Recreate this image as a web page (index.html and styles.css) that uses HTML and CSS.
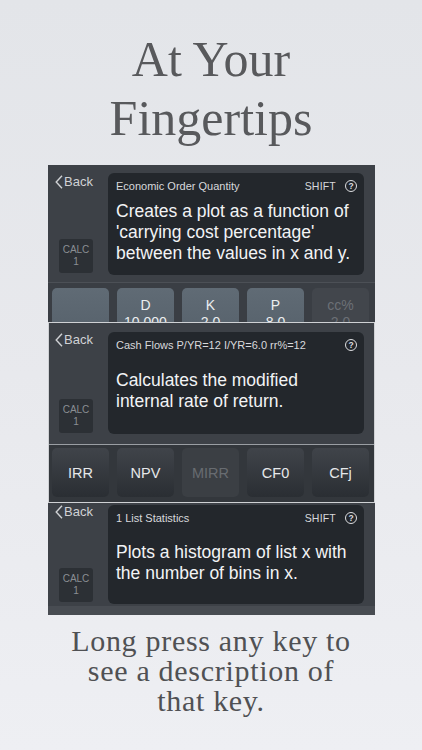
FILE: index.html
```html
<!DOCTYPE html>
<html>
<head>
<meta charset="utf-8">
<link rel="stylesheet" href="styles.css">
</head>
<body>
<h1 class="title">At Your<br>Fingertips</h1>

<div class="stack">
  <section class="panel p1">
    <div class="head">
      <div class="side">
        <div class="back"><svg class="chev" width="8" height="14" viewBox="0 0 8 14"><polyline points="7,0.8 1.2,7 7,13.2" fill="none" stroke="#d0d2d5" stroke-width="1.4"/></svg>Back</div>
        <div class="calc"><span>CALC</span><span>1</span></div>
      </div>
      <div class="box">
        <div class="box-top"><span class="mode">Economic Order Quantity</span><span class="shift">SHIFT</span><span class="help">?</span></div>
        <div class="desc"><p>Creates a plot as a function of<br>'carrying cost percentage'<br>between the values in x and y.</p></div>
      </div>
    </div>
    <div class="keys blue">
      <div class="key"></div>
      <div class="key"><span>D</span><span>10.000</span></div>
      <div class="key"><span>K</span><span>2.0</span></div>
      <div class="key"><span>P</span><span>8.0</span></div>
      <div class="key off"><span>cc%</span><span>2.0</span></div>
    </div>
  </section>

  <section class="panel p2">
    <div class="head">
      <div class="side">
        <div class="back"><svg class="chev" width="8" height="14" viewBox="0 0 8 14"><polyline points="7,0.8 1.2,7 7,13.2" fill="none" stroke="#d0d2d5" stroke-width="1.4"/></svg>Back</div>
        <div class="calc"><span>CALC</span><span>1</span></div>
      </div>
      <div class="box">
        <div class="box-top"><span class="mode">Cash Flows P/YR=12 I/YR=6.0 rr%=12</span><span class="help">?</span></div>
        <div class="desc"><p>Calculates the modified<br>internal rate of return.</p></div>
      </div>
    </div>
    <div class="keys dark">
      <div class="key"><span>IRR</span></div>
      <div class="key"><span>NPV</span></div>
      <div class="key off"><span>MIRR</span></div>
      <div class="key"><span>CF0</span></div>
      <div class="key"><span>CFj</span></div>
    </div>
  </section>

  <section class="panel p3">
    <div class="head">
      <div class="side">
        <div class="back"><svg class="chev" width="8" height="14" viewBox="0 0 8 14"><polyline points="7,0.8 1.2,7 7,13.2" fill="none" stroke="#d0d2d5" stroke-width="1.4"/></svg>Back</div>
        <div class="calc"><span>CALC</span><span>1</span></div>
      </div>
      <div class="box">
        <div class="box-top"><span class="mode">1 List Statistics</span><span class="shift">SHIFT</span><span class="help">?</span></div>
        <div class="desc"><p>Plots a histogram of list x with<br>the number of bins in x.</p></div>
      </div>
    </div>
    <div class="strip"></div>
  </section>
</div>

<p class="caption">Long press any key to<br>see a description of<br>that key.</p>
</body>
</html>
```

FILE: styles.css
```css
html, body {
  margin: 0;
  padding: 0;
}
body {
  width: 422px;
  height: 750px;
  overflow: hidden;
  background: linear-gradient(180deg, #e3e5e9 0%, #e8e9ed 50%, #eeeff3 100%);
  font-family: "Liberation Sans", Arial, sans-serif;
}
.title {
  margin: 30px 0 0;
  text-align: center;
  font-family: "Liberation Serif", "Times New Roman", serif;
  font-weight: normal;
  font-size: 50px;
  line-height: 59px;
  color: #58595c;
}
.stack {
  margin: 17px 0 0 48px;
  width: 327px;
  display: flex;
  flex-direction: column;
}
.panel {
  background: #3d4147;
  overflow: hidden;
  box-sizing: border-box;
}
.p1 { height: 157px; }
.p2 {
  height: 181px;
  border: 1px solid #cfd1d4;
}
.p3 { height: 112px; }

.head {
  display: flex;
  padding-right: 10px;
}
.p1 .head { padding-top: 8px; padding-bottom: 7px; }
.p2 .head { padding-top: 9px; padding-bottom: 10px; padding-right: 9px; }
.p3 .head { padding-top: 2px; padding-bottom: 0; }

.side {
  width: 60px;
  flex: none;
  display: flex;
  flex-direction: column;
  justify-content: space-between;
  padding-bottom: 2px;
  box-sizing: border-box;
}
.p2 .side { width: 59px; padding-bottom: 1px; }
.back {
  display: flex;
  align-items: center;
  gap: 1px;
  padding-left: 7px;
  margin-top: 1px;
  font-size: 13px;
  line-height: 16px;
  color: #d0d2d5;
}
.p2 .back { margin-top: 0; padding-left: 6px; }
.p3 .back { margin-top: -1px; }
.chev { display: block; }
.calc {
  margin-left: 11px;
  width: 34px;
  height: 34px;
  border-radius: 3px;
  background: #2c3035;
  display: flex;
  flex-direction: column;
  align-items: center;
  justify-content: center;
  font-size: 10px;
  line-height: 12px;
  color: #8a8e93;
}
.p2 .calc { margin-left: 10px; }

.box {
  width: 256px;
  height: 102px;
  background: #23272c;
  border-radius: 6px;
  display: flex;
  flex-direction: column;
  box-sizing: border-box;
  padding: 6px 7px 0 8px;
}
.p3 .box { height: 99px; }
.box-top {
  display: flex;
  align-items: center;
  height: 14px;
  font-size: 11px;
  line-height: 14px;
  color: #d8d9dc;
  white-space: nowrap;
}
.mode { flex: 1; }
.shift {
  font-size: 10.5px;
  margin-right: 9px;
  letter-spacing: 0.2px;
}
.help {
  width: 10px;
  height: 10px;
  border: 1.3px solid #dcdde0;
  border-radius: 50%;
  display: flex;
  align-items: center;
  justify-content: center;
  font-size: 8.5px;
  font-weight: bold;
  line-height: 10px;
  color: #dcdde0;
}
.desc {
  flex: 1;
  display: flex;
  align-items: center;
  padding-bottom: 4px;
}
.desc p {
  margin: 0;
  font-size: 17.5px;
  line-height: 21px;
  color: #f2f3f5;
  white-space: nowrap;
}

.keys {
  display: flex;
  gap: 8px;
}
.key {
  width: 57px;
  flex: none;
  border-radius: 5px;
  display: flex;
  flex-direction: column;
  align-items: center;
  color: #eceef0;
}
.keys.blue {
  border-top: 1px solid #4c5056;
  padding: 5px 4px 0;
  height: 40px;
  box-sizing: border-box;
  background: #3a3e44;
}
.keys.blue .key {
  height: 50px;
  background: linear-gradient(180deg, #606b75 0%, #56616b 100%);
  padding-top: 9px;
  box-sizing: border-box;
  font-size: 14px;
  line-height: 17px;
}
.keys.blue .key.off {
  background: #42464c;
  color: #6c7076;
}
.keys.dark {
  border-top: 1px solid #9a9ea3;
  padding: 3px 3px 5px;
  background: #33373c;
}
.keys.dark .key {
  height: 49px;
  justify-content: center;
  background: linear-gradient(180deg, #40444a 0%, #2a2e33 100%);
  font-size: 14.5px;
  color: #e6e8ea;
}
.keys.dark .key.off {
  background: #3b3f44;
  color: #686c71;
}
.strip {
  height: 9px;
  margin-top: 2px;
  background: #484c52;
}

.caption {
  margin: 11px 0 0;
  text-align: center;
  font-family: "Liberation Serif", "Times New Roman", serif;
  font-size: 30px;
  line-height: 30px;
  letter-spacing: 0.7px;
  color: #505154;
}
```
